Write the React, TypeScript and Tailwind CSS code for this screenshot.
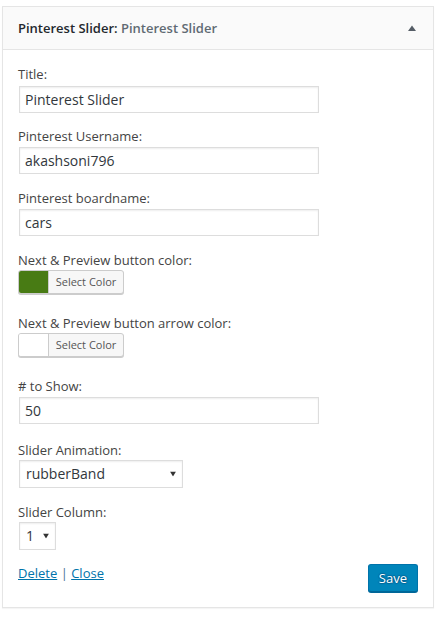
import React from "react";

function Label({ children }: { children: React.ReactNode }) {
  return <div className="block text-[13px] leading-[18px] text-[#444]">{children}</div>;
}

function TextInput({ value, className }: { value: string; className: string }) {
  return (
    <input
      readOnly
      value={value}
      className={`ml-px block h-[27px] w-[300px] border border-[#ddd] bg-white px-[5px] text-[14px] text-[#32373c] shadow-[inset_0_1px_2px_rgba(0,0,0,0.07)] outline-none ${className}`}
    />
  );
}

function ColorButton({ color, className }: { color: string; className: string }) {
  return (
    <div
      className={`flex h-[24px] w-[106px] overflow-hidden rounded-[3px] border border-[#ccc] bg-[#f7f7f7] shadow-[0_1px_0_#ccc] ${className}`}
    >
      <span className="w-[30px] border-r border-[#ccc]" style={{ backgroundColor: color }} />
      <span className="flex-1 text-center text-[11px] leading-[22px] text-[#555]">Select Color</span>
    </div>
  );
}

function Arrow() {
  return (
    <svg
      className="absolute right-[7px] top-1/2 -translate-y-1/2"
      width="6"
      height="5"
      viewBox="0 0 6 5"
    >
      <polygon points="0,0 6,0 3,5" fill="#333" />
    </svg>
  );
}

export default function App() {
  return (
    <div className="min-h-screen bg-white pl-[2px] pt-[6px] font-['Open_Sans',sans-serif]">
      <div className="w-[432px] border border-[#e5e5e5] bg-white shadow-[0_1px_1px_rgba(0,0,0,0.04)]">
        {/* header */}
        <div className="flex h-[43px] justify-between border-b border-[#e5e5e5] bg-[#fafafa] pl-[15px] pr-[17px]">
          <div className="pt-[12px] text-[13px] font-semibold leading-[19px]">
            <span className="text-[#23282d]">Pinterest Slider:</span>
            <span className="text-[#606a73]"> Pinterest Slider</span>
          </div>
          <svg className="self-center" width="8" height="6" viewBox="0 0 8 6">
            <polygon points="0,6 4,0.5 8,6" fill="#555d66" />
          </svg>
        </div>

        {/* body */}
        <div className="px-[15px] pb-[15px] pt-[15px]">
          <Label>Title:</Label>
          <TextInput value="Pinterest Slider" className="mt-[3px]" />

          <div className="mt-[14px]">
            <Label>Pinterest Username:</Label>
            <TextInput value="akashsoni796" className="mt-[2px]" />
          </div>

          <div className="mt-[15px]">
            <Label>Pinterest boardname:</Label>
            <TextInput value="cars" className="mt-[2px]" />
          </div>

          <div className="mt-[15px]">
            <Label>Next &amp; Preview button color:</Label>
            <ColorButton color="#487b14" className="mt-px" />
          </div>

          <div className="mt-[20px]">
            <Label>Next &amp; Preview button arrow color:</Label>
            <ColorButton color="#ffffff" className="mt-px" />
          </div>

          <div className="mt-[20px]">
            <Label># to Show:</Label>
            <TextInput value="50" className="mt-[2px]" />
          </div>

          <div className="mt-[17px]">
            <Label>Slider Animation:</Label>
            <div className="relative ml-px mt-px h-[28px] w-[164px]">
              <div className="h-full border border-[#ddd] bg-white pl-[6px] text-[14px] leading-[26px] text-[#32373c] shadow-[inset_0_1px_2px_rgba(0,0,0,0.07)]">
                rubberBand
              </div>
              <Arrow />
            </div>
          </div>

          <div className="mt-[15px]">
            <Label>Slider Column:</Label>
            <div className="relative ml-px mt-px h-[28px] w-[37px]">
              <div className="h-full border border-[#ddd] bg-white pl-[6px] text-[14px] leading-[26px] text-[#32373c] shadow-[inset_0_1px_2px_rgba(0,0,0,0.07)]">
                1
              </div>
              <Arrow />
            </div>
          </div>

          <div className="mt-[14px] flex items-start justify-between">
            <div className="text-[13px] leading-[18px] text-[#0073aa]">
              <a className="underline" href="#">Delete</a>
              <span className="text-[#4a7591]"> | </span>
              <a className="underline" href="#">Close</a>
            </div>
            <button className="h-[28px] rounded-[3px] border border-[#0073aa] border-b-[#006799] bg-[#0085ba] px-[10px] text-[13px] leading-[26px] text-white shadow-[0_1px_0_#006799] [text-shadow:0_-1px_1px_#006799,1px_0_1px_#006799,0_1px_1px_#006799,-1px_0_1px_#006799]">
              Save
            </button>
          </div>
        </div>
      </div>
    </div>
  );
}
